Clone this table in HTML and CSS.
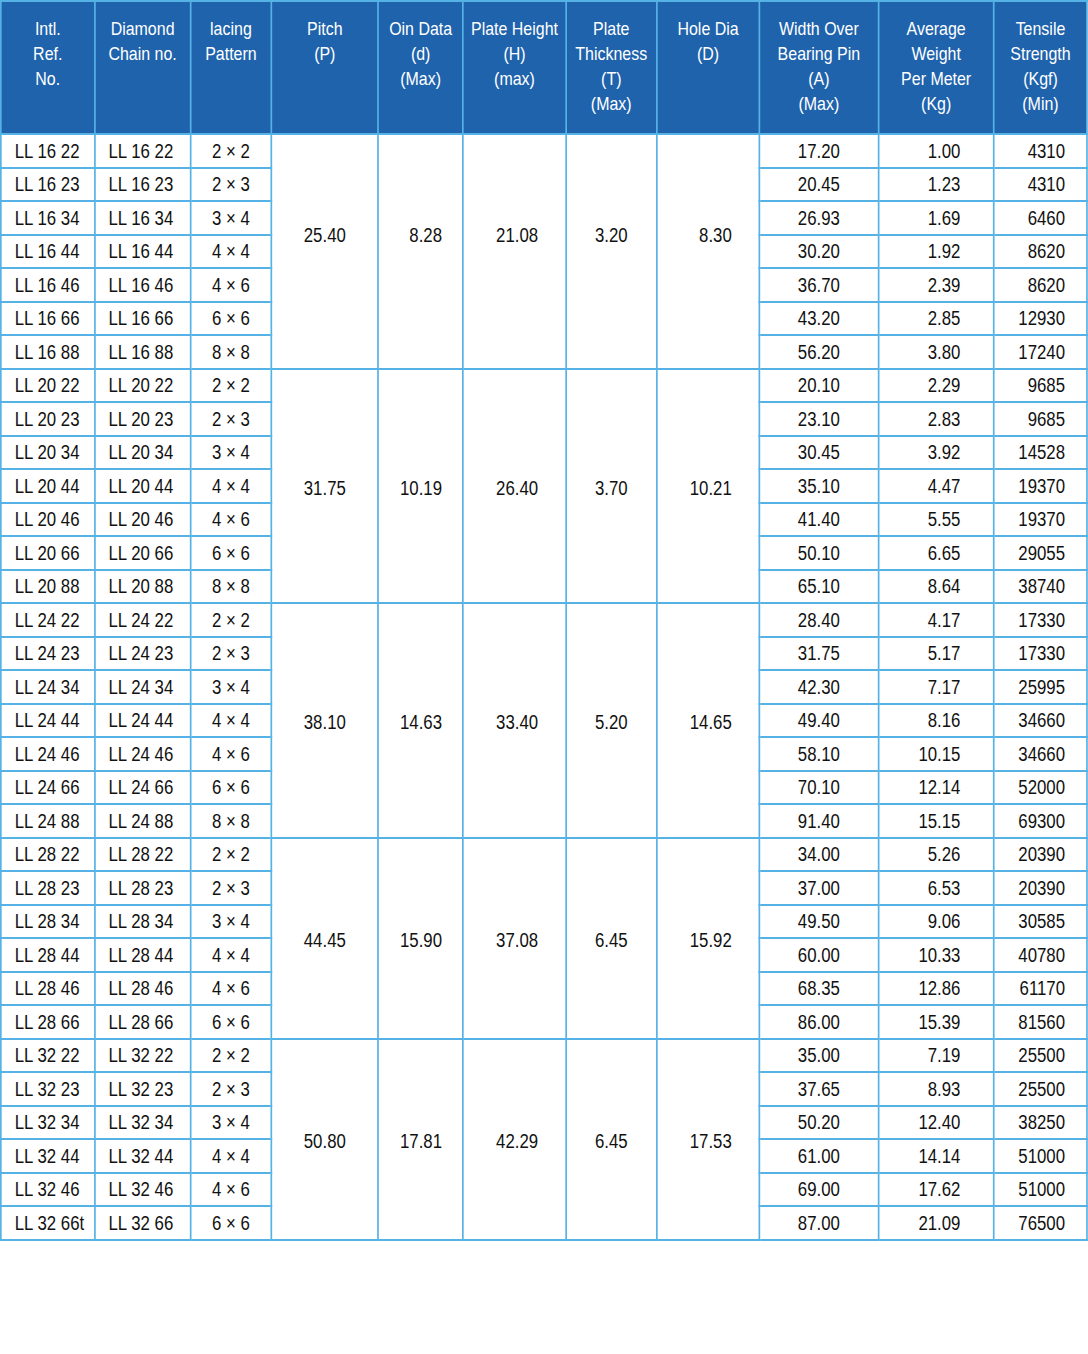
FILE: index.html
```html
<!DOCTYPE html>
<html lang="en">
<head>
    <meta charset="UTF-8">
    <meta name="viewport" content="width=device-width, initial-scale=1.0">
    <title>Leaf Chain</title>
    <link rel="stylesheet" href="styles.css">
</head>
<body>
  <div class="sheet">
    <table class="chain">
        <colgroup>
            <col style="width:111.7px"><col style="width:114.1px"><col style="width:96.3px"><col style="width:127.2px">
            <col style="width:101px"><col style="width:122.4px"><col style="width:108.1px"><col style="width:122.4px">
            <col style="width:141.4px"><col style="width:137.9px"><col style="width:110.5px">
        </colgroup>
        <thead>
            <tr>
                <th>Intl.<br>Ref.<br>No.</th>
                <th>Diamond<br>Chain no.</th>
                <th>lacing<br>Pattern</th>
                <th>Pitch<br>(P)</th>
                <th>Oin Data<br>(d)<br>(Max)</th>
                <th>Plate Height<br>(H)<br>(max)</th>
                <th>Plate<br>Thickness<br>(T)<br>(Max)</th>
                <th>Hole Dia<br>(D)</th>
                <th>Width Over<br>Bearing Pin<br>(A)<br>(Max)</th>
                <th>Average<br>Weight<br>Per Meter<br>(Kg)</th>
                <th>Tensile<br>Strength<br>(Kgf)<br>(Min)</th>
            </tr>
        </thead>
        <tbody>
            <tr><td>LL 16 22</td><td>LL 16 22</td><td class="c">2 × 2</td>
                <td rowspan="7" class="c mg first">25.40</td><td rowspan="7" class="r d mg first">8.28</td><td rowspan="7" class="r h mg first">21.08</td><td rowspan="7" class="c mg first">3.20</td><td rowspan="7" class="r h mg first">8.30</td>
                <td class="c">17.20</td><td class="r w">1.00</td><td class="r t">4310</td></tr>
            <tr><td>LL 16 23</td><td>LL 16 23</td><td class="c">2 × 3</td><td class="c">20.45</td><td class="r w">1.23</td><td class="r t">4310</td></tr>
            <tr><td>LL 16 34</td><td>LL 16 34</td><td class="c">3 × 4</td><td class="c">26.93</td><td class="r w">1.69</td><td class="r t">6460</td></tr>
            <tr><td>LL 16 44</td><td>LL 16 44</td><td class="c">4 × 4</td><td class="c">30.20</td><td class="r w">1.92</td><td class="r t">8620</td></tr>
            <tr><td>LL 16 46</td><td>LL 16 46</td><td class="c">4 × 6</td><td class="c">36.70</td><td class="r w">2.39</td><td class="r t">8620</td></tr>
            <tr><td>LL 16 66</td><td>LL 16 66</td><td class="c">6 × 6</td><td class="c">43.20</td><td class="r w">2.85</td><td class="r t">12930</td></tr>
            <tr><td>LL 16 88</td><td>LL 16 88</td><td class="c">8 × 8</td><td class="c">56.20</td><td class="r w">3.80</td><td class="r t">17240</td></tr>

            <tr><td>LL 20 22</td><td>LL 20 22</td><td class="c">2 × 2</td>
                <td rowspan="7" class="c mg">31.75</td><td rowspan="7" class="r d mg">10.19</td><td rowspan="7" class="r h mg">26.40</td><td rowspan="7" class="c mg">3.70</td><td rowspan="7" class="r h mg">10.21</td>
                <td class="c">20.10</td><td class="r w">2.29</td><td class="r t">9685</td></tr>
            <tr><td>LL 20 23</td><td>LL 20 23</td><td class="c">2 × 3</td><td class="c">23.10</td><td class="r w">2.83</td><td class="r t">9685</td></tr>
            <tr><td>LL 20 34</td><td>LL 20 34</td><td class="c">3 × 4</td><td class="c">30.45</td><td class="r w">3.92</td><td class="r t">14528</td></tr>
            <tr><td>LL 20 44</td><td>LL 20 44</td><td class="c">4 × 4</td><td class="c">35.10</td><td class="r w">4.47</td><td class="r t">19370</td></tr>
            <tr><td>LL 20 46</td><td>LL 20 46</td><td class="c">4 × 6</td><td class="c">41.40</td><td class="r w">5.55</td><td class="r t">19370</td></tr>
            <tr><td>LL 20 66</td><td>LL 20 66</td><td class="c">6 × 6</td><td class="c">50.10</td><td class="r w">6.65</td><td class="r t">29055</td></tr>
            <tr><td>LL 20 88</td><td>LL 20 88</td><td class="c">8 × 8</td><td class="c">65.10</td><td class="r w">8.64</td><td class="r t">38740</td></tr>

            <tr><td>LL 24 22</td><td>LL 24 22</td><td class="c">2 × 2</td>
                <td rowspan="7" class="c mg">38.10</td><td rowspan="7" class="r d mg">14.63</td><td rowspan="7" class="r h mg">33.40</td><td rowspan="7" class="c mg">5.20</td><td rowspan="7" class="r h mg">14.65</td>
                <td class="c">28.40</td><td class="r w">4.17</td><td class="r t">17330</td></tr>
            <tr><td>LL 24 23</td><td>LL 24 23</td><td class="c">2 × 3</td><td class="c">31.75</td><td class="r w">5.17</td><td class="r t">17330</td></tr>
            <tr><td>LL 24 34</td><td>LL 24 34</td><td class="c">3 × 4</td><td class="c">42.30</td><td class="r w">7.17</td><td class="r t">25995</td></tr>
            <tr><td>LL 24 44</td><td>LL 24 44</td><td class="c">4 × 4</td><td class="c">49.40</td><td class="r w">8.16</td><td class="r t">34660</td></tr>
            <tr><td>LL 24 46</td><td>LL 24 46</td><td class="c">4 × 6</td><td class="c">58.10</td><td class="r w">10.15</td><td class="r t">34660</td></tr>
            <tr><td>LL 24 66</td><td>LL 24 66</td><td class="c">6 × 6</td><td class="c">70.10</td><td class="r w">12.14</td><td class="r t">52000</td></tr>
            <tr><td>LL 24 88</td><td>LL 24 88</td><td class="c">8 × 8</td><td class="c">91.40</td><td class="r w">15.15</td><td class="r t">69300</td></tr>

            <tr><td>LL 28 22</td><td>LL 28 22</td><td class="c">2 × 2</td>
                <td rowspan="6" class="c mg">44.45</td><td rowspan="6" class="r d mg">15.90</td><td rowspan="6" class="r h mg">37.08</td><td rowspan="6" class="c mg">6.45</td><td rowspan="6" class="r h mg">15.92</td>
                <td class="c">34.00</td><td class="r w">5.26</td><td class="r t">20390</td></tr>
            <tr><td>LL 28 23</td><td>LL 28 23</td><td class="c">2 × 3</td><td class="c">37.00</td><td class="r w">6.53</td><td class="r t">20390</td></tr>
            <tr><td>LL 28 34</td><td>LL 28 34</td><td class="c">3 × 4</td><td class="c">49.50</td><td class="r w">9.06</td><td class="r t">30585</td></tr>
            <tr><td>LL 28 44</td><td>LL 28 44</td><td class="c">4 × 4</td><td class="c">60.00</td><td class="r w">10.33</td><td class="r t">40780</td></tr>
            <tr><td>LL 28 46</td><td>LL 28 46</td><td class="c">4 × 6</td><td class="c">68.35</td><td class="r w">12.86</td><td class="r t">61170</td></tr>
            <tr><td>LL 28 66</td><td>LL 28 66</td><td class="c">6 × 6</td><td class="c">86.00</td><td class="r w">15.39</td><td class="r t">81560</td></tr>

            <tr><td>LL 32 22</td><td>LL 32 22</td><td class="c">2 × 2</td>
                <td rowspan="6" class="c mg">50.80</td><td rowspan="6" class="r d mg">17.81</td><td rowspan="6" class="r h mg">42.29</td><td rowspan="6" class="c mg">6.45</td><td rowspan="6" class="r h mg">17.53</td>
                <td class="c">35.00</td><td class="r w">7.19</td><td class="r t">25500</td></tr>
            <tr><td>LL 32 23</td><td>LL 32 23</td><td class="c">2 × 3</td><td class="c">37.65</td><td class="r w">8.93</td><td class="r t">25500</td></tr>
            <tr><td>LL 32 34</td><td>LL 32 34</td><td class="c">3 × 4</td><td class="c">50.20</td><td class="r w">12.40</td><td class="r t">38250</td></tr>
            <tr><td>LL 32 44</td><td>LL 32 44</td><td class="c">4 × 4</td><td class="c">61.00</td><td class="r w">14.14</td><td class="r t">51000</td></tr>
            <tr><td>LL 32 46</td><td>LL 32 46</td><td class="c">4 × 6</td><td class="c">69.00</td><td class="r w">17.62</td><td class="r t">51000</td></tr>
            <tr><td>LL 32 66t</td><td>LL 32 66</td><td class="c">6 × 6</td><td class="c">87.00</td><td class="r w">21.09</td><td class="r t">76500</td></tr>
        </tbody>
    </table>
  </div>
</body>
</html>
```

FILE: styles.css
```css
* {
    margin: 0;
    box-sizing: border-box;
}
body {
    margin: 0;
    background: #fff;
    overflow: hidden;
    font-family: "Liberation Sans", Arial, sans-serif;
}
.sheet {
    width: 1088px;
    overflow: hidden;
}
/* no condensed face installed: lay out wide, then squeeze the whole table */
.chain {
    width: 1293px;
    table-layout: fixed;
    border-collapse: collapse;
    border: 2px solid #55b2e5;
    transform: scaleX(0.84);
    transform-origin: left top;
}
.chain th,
.chain td {
    border: 2px solid #55b2e5;
    padding: 0;
}
.chain th {
    background-color: #1f63ad;
    color: #fff;
    font-weight: normal;
    font-size: 19px;
    line-height: 25px;
    height: 133px;
    vertical-align: top;
    text-align: center;
    padding-top: 14px;
}
.chain td {
    height: 33.5px;
    font-size: 20px;
    color: #111;
    padding-left: 15.5px;
    vertical-align: middle;
    line-height: 20px;
}
.chain td.c {
    text-align: center;
    padding-left: 0;
}
.chain td.r {
    text-align: right;
    padding-left: 0;
}
.chain td.d { padding-right: 24px; }
.chain td.h { padding-right: 32px; }
.chain td.w { padding-right: 39px; }
.chain td.t { padding-right: 25px; }
.chain td.mg { padding-top: 4px; }
.chain td.first { padding-top: 0; padding-bottom: 32px; }
```
